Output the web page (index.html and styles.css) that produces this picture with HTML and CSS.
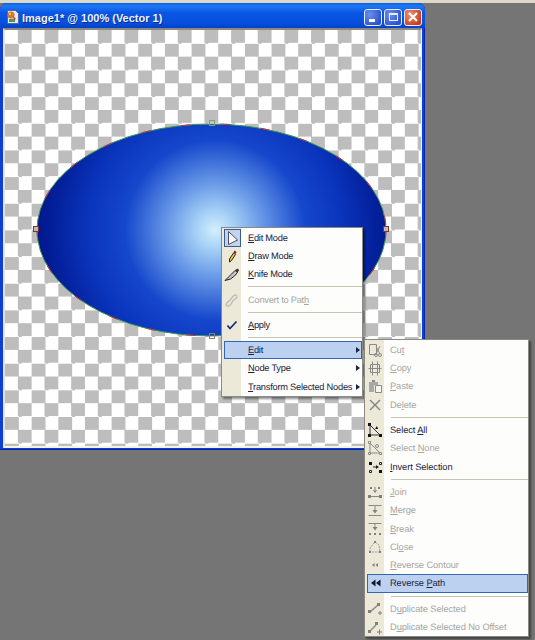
FILE: index.html
```html
<!DOCTYPE html>
<html lang="en">
<head>
  <meta charset="UTF-8">
  <title>Image1* @ 100% (Vector 1)</title>
  <link rel="stylesheet" href="styles.css">
</head>
<body>
  <div class="topstrip"></div>

  <div class="window">
    <div class="titlebar">
      <svg class="appicon" width="13" height="14" viewBox="0 0 13 14">
        <path d="M1.500.5h8l3 3v10h-11z" fill="#e8e8f0" stroke="#4a6aa0"/>
        <circle cx="5" cy="5" r="3.500" fill="#d8742c"/>
        <circle cx="4" cy="4" r="1.200" fill="#f4d060"/>
        <path d="M3 9h6v3H3z" fill="#4a9a50"/>
        <path d="M7 6l3 3-2 1z" fill="#c03a30"/>
      </svg>
      <span class="wintitle">Image1* @ 100% (Vector 1)</span>
      <div class="winbtns">
        <div class="winbtn"><span class="glyph-min"></span></div>
        <div class="winbtn"><span class="glyph-max"></span></div>
        <div class="winbtn close">
          <svg width="12" height="12" viewBox="0 0 12 12"><path d="M2 2l8 8M10 2l-8 8" stroke="#fff" stroke-width="2.200"/></svg>
        </div>
      </div>
    </div>
    <div class="canvas">
      <svg class="shape" width="362" height="224" viewBox="0 0 362 224">
        <defs>
          <radialGradient id="fill" gradientUnits="userSpaceOnUse" cx="184" cy="112" r="180">
            <stop offset="0" stop-color="#d3effc"/>
            <stop offset="0.1" stop-color="#a8d2f6"/>
            <stop offset="0.25" stop-color="#6d9de8"/>
            <stop offset="0.5" stop-color="#1547cc"/>
            <stop offset="0.7" stop-color="#0a35bd"/>
            <stop offset="1" stop-color="#00158a"/>
          </radialGradient>
        </defs>
        <ellipse cx="180.500" cy="112" rx="174.500" ry="106" fill="url(#fill)"/>
        <ellipse cx="180.500" cy="112" rx="174.500" ry="106" fill="none" stroke="#3f9a50"/>
        <ellipse cx="180.500" cy="112" rx="174.500" ry="106" fill="none" stroke="#c8303c" stroke-dasharray="9 31"/>
        <rect x="178.500" y="2.500" width="5" height="5" fill="none" stroke="#8a9a80"/>
        <rect x="178.500" y="215.500" width="5" height="5" fill="none" stroke="#8a7a70"/>
        <rect x="2.500" y="108.500" width="5" height="5" fill="#b8c0b0" stroke="#803040"/>
        <rect x="352.500" y="108.500" width="5" height="5" fill="#b8c0b0" stroke="#803040"/>
      </svg>
    </div>
  </div>

  <div class="menu menu-main">
    <div class="item">
      <span class="ico pressed">
        <svg width="14" height="16" viewBox="0 0 14 16"><path d="M2.500 1.500v13l9-4.500z" fill="#f4f6fb" stroke="#50545c"/></svg>
      </span>
      <span class="label"><u>E</u>dit Mode</span>
    </div>
    <div class="item">
      <span class="ico">
        <svg width="16" height="16" viewBox="0 0 16 16"><path d="M9.500 5l2 1.500-4 6-2 1.500 0-3z" fill="#f0d020" stroke="#222"/><path d="M9.500 4.500l1-2 2 1.500-1 2z" fill="#901c20"/></svg>
      </span>
      <span class="label"><u>D</u>raw Mode</span>
    </div>
    <div class="item">
      <span class="ico">
        <svg width="16" height="16" viewBox="0 0 16 16"><path d="M1 14.500l6-6 4-4 2.500 2-3 3.500-4 3z" fill="#c4c4c4" stroke="#222"/><path d="M11 4l3-1.500 1 2-1.500 2z" fill="#333"/></svg>
      </span>
      <span class="label"><u>K</u>nife Mode</span>
    </div>
    <div class="sep"></div>
    <div class="item off">
      <span class="ico">
        <svg width="16" height="16" viewBox="0 0 16 16"><path d="M2 13c0-3 3-3 5-6s3-5 5-4 1 3-1 4-3 3-4 5-4 3-5 1z" fill="none" stroke="#b8b8b4" stroke-width="1.300"/></svg>
      </span>
      <span class="label">Convert to Pat<u>h</u></span>
    </div>
    <div class="sep"></div>
    <div class="item">
      <span class="ico">
        <svg width="16" height="16" viewBox="0 0 16 16"><path d="M3.500 8.500l2.500 3 6.500-7" fill="none" stroke="#1a2a80" stroke-width="1.800"/></svg>
      </span>
      <span class="label"><u>A</u>pply</span>
    </div>
    <div class="sep"></div>
    <div class="item on">
      <span class="ico"></span>
      <span class="label"><u>E</u>dit</span>
      <span class="arrow"></span>
    </div>
    <div class="item">
      <span class="ico"></span>
      <span class="label"><u>N</u>ode Type</span>
      <span class="arrow"></span>
    </div>
    <div class="item">
      <span class="ico"></span>
      <span class="label"><u>T</u>ransform Selected Nodes</span>
      <span class="arrow"></span>
    </div>
  </div>

  <div class="menu menu-edit">
    <div class="item off">
      <span class="ico">
        <svg width="16" height="16" viewBox="0 0 16 16"><path d="M2.500 2.500h7v10h-7z" fill="none" stroke="#8a8a88"/><path d="M9 4l4 8M13 4l-4 8" stroke="#8a8a88"/><circle cx="9" cy="13" r="1.500" fill="none" stroke="#8a8a88"/><circle cx="13" cy="13" r="1.500" fill="none" stroke="#8a8a88"/></svg>
      </span>
      <span class="label">Cu<u>t</u></span>
    </div>
    <div class="item off">
      <span class="ico">
        <svg width="16" height="16" viewBox="0 0 16 16"><path d="M3.500 4.500h9v8h-9zM5.500 1.500v14M10.500 1.500v14M1.500 8.500h13" fill="none" stroke="#8a8a88"/></svg>
      </span>
      <span class="label"><u>C</u>opy</span>
    </div>
    <div class="item off">
      <span class="ico">
        <svg width="16" height="16" viewBox="0 0 16 16"><path d="M2 4h9v3H7v7H2z" fill="#a8a8a6"/><path d="M8.500 7.500h6v7h-6z" fill="#f4f4f0" stroke="#8a8a88"/><path d="M5 2h3v2H5z" fill="#8a8a88"/></svg>
      </span>
      <span class="label"><u>P</u>aste</span>
    </div>
    <div class="item off">
      <span class="ico">
        <svg width="16" height="16" viewBox="0 0 16 16"><path d="M3 3l10 10M13 3L3 13" stroke="#808080" stroke-width="1.300"/></svg>
      </span>
      <span class="label">De<u>l</u>ete</span>
    </div>
    <div class="sep"></div>
    <div class="item">
      <span class="ico">
        <svg width="16" height="16" viewBox="0 0 16 16"><path d="M3 3l10 10H3z" fill="none" stroke="#333"/><path d="M1 1h3v3H1zM1 12h3v3H1zM12 12h3v3h-3z" fill="#111"/><path d="M8 7l2-3 1 3z" fill="#111"/></svg>
      </span>
      <span class="label">Select <u>A</u>ll</span>
    </div>
    <div class="item off">
      <span class="ico">
        <svg width="16" height="16" viewBox="0 0 16 16"><path d="M3 3l10 10H3z" fill="none" stroke="#8a8a88"/><path d="M1.500 1.500h2v2h-2zM1.500 12.500h2v2h-2zM12.500 12.500h2v2h-2z" fill="#fff" stroke="#8a8a88"/><circle cx="10" cy="6" r="1.500" fill="none" stroke="#8a8a88"/></svg>
      </span>
      <span class="label">Select <u>N</u>one</span>
    </div>
    <div class="item">
      <span class="ico">
        <svg width="16" height="16" viewBox="0 0 16 16"><path d="M2 3h3v3H2zM12 11h3v3h-3z" fill="#111"/><path d="M2.500 11.500h2v2h-2zM12.500 3.500h2v2h-2z" fill="#fff" stroke="#222"/><path d="M6 8h5" stroke="#222"/><path d="M9 6l3 2-3 2z" fill="#222"/></svg>
      </span>
      <span class="label"><u>I</u>nvert Selection</span>
    </div>
    <div class="sep"></div>
    <div class="item off">
      <span class="ico">
        <svg width="16" height="16" viewBox="0 0 16 16"><path d="M3 3h2v2H3zM11 3h2v2h-2z" fill="#808080"/><path d="M2 12.500h12" stroke="#8a8a88"/><path d="M1 11h3v3H1zM12 11h3v3h-3z" fill="#808080"/><path d="M8 3v4M6.500 6L8 8.500 9.500 6" fill="none" stroke="#808080"/></svg>
      </span>
      <span class="label"><u>J</u>oin</span>
    </div>
    <div class="item off">
      <span class="ico">
        <svg width="16" height="16" viewBox="0 0 16 16"><path d="M1.500 3.500h13M1.500 13.500h13M8 4v6" fill="none" stroke="#8a8a88"/><path d="M5.500 8h5L8 11.500z" fill="#808080"/></svg>
      </span>
      <span class="label"><u>M</u>erge</span>
    </div>
    <div class="item off">
      <span class="ico">
        <svg width="16" height="16" viewBox="0 0 16 16"><path d="M1.500 2.500h13M8 3v5" fill="none" stroke="#8a8a88"/><path d="M5.500 6h5L8 9.500z" fill="#808080"/><path d="M2 12h2v2H2zM7 12h2v2H7zM12 12h2v2h-2z" fill="#808080"/></svg>
      </span>
      <span class="label"><u>B</u>reak</span>
    </div>
    <div class="item off">
      <span class="ico">
        <svg width="16" height="16" viewBox="0 0 16 16"><path d="M3 13v-4l5-6 4 3 1 7z" fill="none" stroke="#9a9a98" stroke-dasharray="2 1"/><path d="M2 12h2v2H2zM12 12h2v2h-2zM7 2h2v2H7z" fill="#808080"/></svg>
      </span>
      <span class="label">Cl<u>o</u>se</span>
    </div>
    <div class="item off">
      <span class="ico">
        <svg width="16" height="16" viewBox="0 0 16 16"><path d="M7.500 6v4L5 8zM11 6v4L8.500 8z" fill="#808080"/></svg>
      </span>
      <span class="label"><u>R</u>everse Contour</span>
    </div>
    <div class="item on">
      <span class="ico">
        <svg width="16" height="16" viewBox="0 0 16 16"><path d="M7.500 4.500v7L3 8zM12.500 4.500v7L8 8z" fill="#10182c"/></svg>
      </span>
      <span class="label">Reverse <u>P</u>ath</span>
    </div>
    <div class="sep"></div>
    <div class="item off">
      <span class="ico">
        <svg width="16" height="16" viewBox="0 0 16 16"><path d="M3 11l8-7" stroke="#8a8a88" stroke-width="1.500"/><path d="M1 9h3v3H1zM10 2h3v3h-3z" fill="#808080"/><path d="M11 12h4M13 10v4" stroke="#808080"/></svg>
      </span>
      <span class="label">D<u>u</u>plicate Selected</span>
    </div>
    <div class="item off">
      <span class="ico">
        <svg width="16" height="16" viewBox="0 0 16 16"><path d="M3 12l6-6" stroke="#8a8a88" stroke-width="1.500"/><path d="M1 11h3v3H1zM8 3h3v3H8z" fill="#808080"/><path d="M10 13h5M12.500 10.500v5" stroke="#808080"/></svg>
      </span>
      <span class="label">D<u>u</u>plicate Selected No Offset</span>
    </div>
  </div>
</body>
</html>
```

FILE: styles.css
```css
body {
  margin: 0;
  height: 640px;
  overflow: hidden;
  background: #757575;
  font-family: "Liberation Sans", Arial, sans-serif;
  position: relative;
}
.topstrip {
  height: 3px;
  background: #dcd9c6;
}
.window {
  width: 425px;
  height: 447px;
  box-sizing: border-box;
  padding: 0 3px 2px;
  background: #0a3fd8;
  border-radius: 7px 7px 0 0;
  display: flex;
  flex-direction: column;
  box-shadow: inset -1px 0 #0526a8, inset 0 -1px #0526a8;
}
.titlebar {
  height: 25px;
  flex: none;
  box-sizing: border-box;
  margin: 0 -3px;
  padding: 3px 3px 0 6px;
  border-radius: 7px 7px 0 0;
  background: linear-gradient(180deg, #0a5fe8 0%, #1e78f5 12%, #0a55e4 40%, #0750dd 80%, #0640c8 100%);
  display: flex;
  align-items: center;
  gap: 3px;
}
.wintitle {
  font-size: 11px;
  font-weight: bold;
  color: #eef2ff;
  text-shadow: 1px 1px #0a2a90;
  white-space: nowrap;
  margin-top: 1px;
}
.winbtns {
  margin-left: auto;
  display: flex;
  gap: 2px;
}
.winbtn {
  width: 18px;
  height: 17px;
  box-sizing: border-box;
  border: 1px solid #e8eefc;
  border-radius: 3px;
  background: radial-gradient(circle at 30% 30%, #6a90ee, #2a50d0 80%);
  display: flex;
  align-items: center;
  justify-content: center;
}
.winbtn.close {
  background: radial-gradient(circle at 30% 30%, #ec9078, #c83a18 80%);
}
.glyph-min {
  width: 6px;
  height: 3px;
  background: #fff;
  margin-top: 7px;
  margin-right: 3px;
}
.glyph-max {
  width: 9px;
  height: 8px;
  box-sizing: border-box;
  border: 1px solid #e8eefc;
  border-top-width: 2px;
}
.canvas {
  flex: 1;
  position: relative;
  background: repeating-conic-gradient(#bdbdbd 0 25%, #fff 0 50%) 0 0 / 26.66px 26.66px;
  border-top: 2px solid #8a8a80;
  border-left: 2px solid #e8e4d0;
  border-right: 1px solid #f4f2e6;
  border-bottom: 2px solid #f4f2e6;
}
.shape {
  position: absolute;
  left: 26px;
  top: 88px;
}
.menu {
  position: absolute;
  box-sizing: border-box;
  font-size: 9.300px;
  letter-spacing: -0.1px;
  text-rendering: geometricPrecision;
  color: #1c2340;
  background: linear-gradient(90deg, #ece9d8 19px, #fdfdfb 19px);
  border: 1px solid #8a8a82;
  box-shadow: 2px 2px 2px rgba(0, 0, 0, 0.45);
}
.menu-main {
  left: 221px;
  top: 227px;
  width: 142px;
  height: 170px;
  padding-top: 0.500px;
  letter-spacing: -0.250px;
}
.menu-edit {
  left: 364px;
  top: 339px;
  width: 165px;
  height: 298px;
  padding-top: 0.700px;
}
.item {
  height: 18.300px;
  display: flex;
  align-items: center;
  white-space: nowrap;
}
.ico {
  width: 19px;
  height: 100%;
  flex: none;
  display: flex;
  align-items: center;
  justify-content: center;
  box-sizing: border-box;
}
.ico.pressed {
  background: #c3d3ee;
  border: 1px solid #3a5a94;
  margin-left: 2px;
  width: 17px;
}
.label {
  margin-left: 7px;
}
.menu-edit .label {
  margin-left: 6px;
}
.off {
  color: #a6a6a2;
}
.on {
  background: #bcd0f0;
  box-shadow: inset 0 0 0 1px #3566b4;
  margin-left: 2px;
}
.on .ico {
  width: 17px;
}
.arrow {
  margin-left: auto;
  margin-right: 2px;
  border-left: 4px solid #1c2340;
  border-top: 3.500px solid transparent;
  border-bottom: 3.500px solid transparent;
}
.sep {
  height: 7px;
  position: relative;
}
.sep::after {
  content: "";
  position: absolute;
  left: 26px;
  right: 0;
  top: 3px;
  height: 1px;
  background: #c8c5b2;
}
```
